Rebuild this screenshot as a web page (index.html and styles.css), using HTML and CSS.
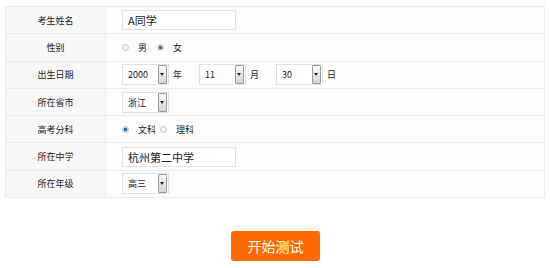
FILE: index.html
```html
<!DOCTYPE html>
<html lang="zh-CN">
<head>
    <meta charset="UTF-8">
    <title>考生信息</title>
    <link rel="stylesheet" href="styles.css">
</head>
<body>
    <table class="info-table">
        <tr>
            <th>考生姓名</th>
            <td><div class="text-input">A同学</div></td>
        </tr>
        <tr>
            <th>性别</th>
            <td>
                <div class="radio-group">
                    <span class="radio"></span><span class="radio-label">男</span>
                    <span class="radio checked"></span><span class="radio-label">女</span>
                </div>
            </td>
        </tr>
        <tr>
            <th>出生日期</th>
            <td>
                <div class="date-group">
                    <div class="select"><span class="select-text">2000</span><span class="select-btn"></span></div>
                    <span class="unit">年</span>
                    <div class="select"><span class="select-text">11</span><span class="select-btn"></span></div>
                    <span class="unit">月</span>
                    <div class="select"><span class="select-text">30</span><span class="select-btn"></span></div>
                    <span class="unit">日</span>
                </div>
            </td>
        </tr>
        <tr>
            <th>所在省市</th>
            <td><div class="select"><span class="select-text">浙江</span><span class="select-btn"></span></div></td>
        </tr>
        <tr>
            <th>高考分科</th>
            <td>
                <div class="radio-group tight">
                    <span class="radio checked"></span><span class="radio-label">文科</span>
                    <span class="radio"></span><span class="radio-label">理科</span>
                </div>
            </td>
        </tr>
        <tr>
            <th>所在中学</th>
            <td><div class="text-input">杭州第二中学</div></td>
        </tr>
        <tr>
            <th>所在年级</th>
            <td><div class="select"><span class="select-text">高三</span><span class="select-btn"></span></div></td>
        </tr>
    </table>
    <div class="actions">
        <button class="start-btn">开始测试</button>
    </div>
</body>
</html>
```

FILE: styles.css
```css
body {
    margin: 0;
    font-family: "Noto Sans CJK SC", "DejaVu Sans", sans-serif;
    color: #222;
    background-color: #fff;
}
.info-table {
    margin: 6px 0 0 5px;
    width: 540px;
    border-collapse: collapse;
    border: 1px solid #e6e6e6;
}
.info-table tr {
    height: 27.3px;
}
.info-table th,
.info-table td {
    border: 1px solid #ececec;
    padding: 0;
    font-size: 9px;
}
.info-table th {
    width: 99px;
    background-color: #f7f7f7;
    font-weight: normal;
    color: #222;
}
.info-table td {
    padding-left: 16px;
    background-color: #fdfdfd;
}
.text-input {
    width: 107px;
    height: 18px;
    border: 1px solid #e2e2e2;
    background-color: #fff;
    padding-left: 5px;
    font-size: 11px;
    line-height: 18px;
    color: #1a1a1a;
}
.radio-group {
    display: flex;
    align-items: center;
}
.radio {
    width: 5px;
    height: 5px;
    border: 1px solid #c8c8c8;
    border-radius: 50%;
    background: radial-gradient(circle, #fff 0, #e4e4e4 100%);
    margin-right: 9px;
}
.radio.checked {
    border-color: #b9c9d8;
    background: radial-gradient(circle, #2a6fb0 0, #2a6fb0 40%, #cfe0ef 60%, #eef4fa 100%);
}
.radio-label {
    margin-right: 10px;
}
.tight .radio-label {
    margin-right: 4px;
}
.date-group {
    display: flex;
    align-items: center;
}
.select {
    display: flex;
    align-items: center;
    width: 45px;
    height: 19px;
    border: 1px solid #e0e0e0;
    background-color: #fff;
}
.select-text {
    flex: 1;
    padding-left: 5px;
    color: #1a1a1a;
}
.select-btn {
    width: 7px;
    height: 17px;
    margin-right: 1px;
    border: 1px solid #9a9a9a;
    border-radius: 1px;
    background: linear-gradient(to bottom, #fafafa, #d6d6d6);
    position: relative;
}
.select-btn::after {
    content: "";
    position: absolute;
    left: 1px;
    top: 7px;
    border-left: 2px solid transparent;
    border-right: 2px solid transparent;
    border-top: 3px solid #222;
}
.unit {
    margin: 0 17px 0 4px;
}
.actions {
    display: flex;
    justify-content: center;
    margin-top: 33px;
    padding-left: 1px;
}
.start-btn {
    width: 89px;
    height: 30px;
    border: none;
    border-radius: 3px;
    background-color: #ff6a00;
    color: #fff;
    font-family: "Noto Sans CJK SC", sans-serif;
    font-size: 14px;
    cursor: pointer;
}
```
